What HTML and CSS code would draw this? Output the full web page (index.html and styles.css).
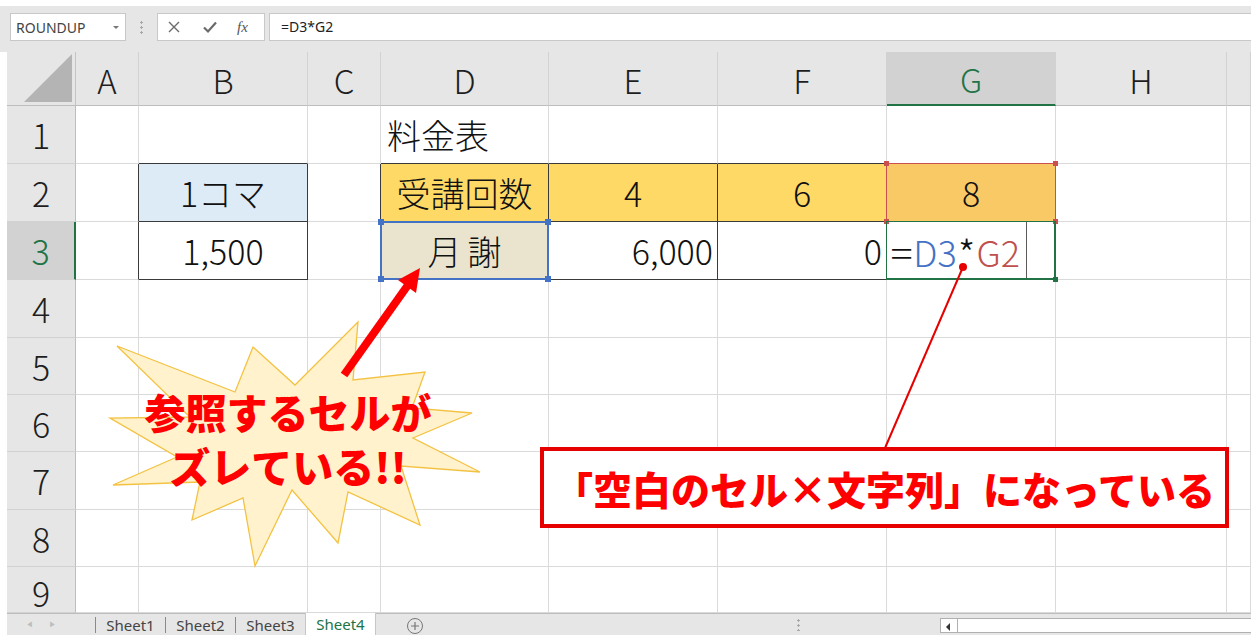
FILE: index.html
```html
<!DOCTYPE html>
<html lang="ja">
<head>
<meta charset="utf-8">
<title>料金表</title>
<link rel="stylesheet" href="styles.css">
</head>
<body>
<div class="page">
  <div class="fbar">
    <div class="namebox"><span>ROUNDUP</span><span class="dd"></span></div>
    <div class="vdots"></div>
    <div class="btns">
      <svg class="ico" width="14" height="14" viewBox="0 0 14 14"><path d="M2 2 L12 12 M12 2 L2 12" stroke="#6a6a6a" stroke-width="1.4" fill="none"/></svg>
      <svg class="ico" width="16" height="14" viewBox="0 0 16 14"><path d="M2 7.5 L6 11.5 L14 2.5" stroke="#6a6a6a" stroke-width="2.2" fill="none"/></svg>
      <span class="fx">fx</span>
    </div>
    <div class="finput">=D3*G2</div>
  </div>

  <div class="sheet">
    <!-- header row -->
    <div class="corner"><div class="tri"></div></div>
    <div class="h">A</div><div class="h">B</div><div class="h">C</div><div class="h">D</div><div class="h">E</div><div class="h">F</div><div class="h sel">G</div><div class="h">H</div><div class="h"></div>

    <!-- row 1 -->
    <div class="r">1</div>
    <div class="c"></div><div class="c bb"></div><div class="c"></div><div class="c bb left">料金表</div><div class="c bb"></div><div class="c bb"></div><div class="c bb"></div><div class="c"></div><div class="c"></div>

    <!-- row 2 -->
    <div class="r">2</div>
    <div class="c br"></div>
    <div class="c t blue">1コマ</div>
    <div class="c br"></div>
    <div class="c t yel">受講回数</div>
    <div class="c t yel">4</div>
    <div class="c t yel">6</div>
    <div class="c t org hl hl-red">8<span class="sq tl"></span><span class="sq tr"></span><span class="sq bl"></span><span class="sq br2"></span></div>
    <div class="c"></div><div class="c"></div>

    <!-- row 3 -->
    <div class="r rsel">3</div>
    <div class="c br"></div>
    <div class="c t">1,500</div>
    <div class="c br"></div>
    <div class="c t tan hl hl-blue"><span class="spaced">月謝</span><span class="sq tl"></span><span class="sq tr"></span><span class="sq bl"></span><span class="sq br2"></span></div>
    <div class="c t right">6,000</div>
    <div class="c t right">0</div>
    <div class="c t edit hl hl-green"><span class="etext"><span class="eq">=</span><span class="ref-b">D3</span><span class="ast">*</span><span class="ref-r">G2</span></span><span class="sq br2"></span></div>
    <div class="c"></div><div class="c"></div>

    <!-- rows 4-9 -->
    <div class="r">4</div>
    <div class="c"></div><div class="c"></div><div class="c"></div><div class="c"></div><div class="c"></div><div class="c"></div><div class="c"></div><div class="c"></div><div class="c"></div>
    <div class="r">5</div>
    <div class="c"></div><div class="c"></div><div class="c"></div><div class="c"></div><div class="c"></div><div class="c"></div><div class="c"></div><div class="c"></div><div class="c"></div>
    <div class="r">6</div>
    <div class="c"></div><div class="c"></div><div class="c"></div><div class="c"></div><div class="c"></div><div class="c"></div><div class="c"></div><div class="c"></div><div class="c"></div>
    <div class="r">7</div>
    <div class="c"></div><div class="c"></div><div class="c"></div><div class="c"></div><div class="c"></div><div class="c"></div><div class="c"></div><div class="c"></div><div class="c"></div>
    <div class="r">8</div>
    <div class="c"></div><div class="c"></div><div class="c"></div><div class="c"></div><div class="c"></div><div class="c"></div><div class="c"></div><div class="c"></div><div class="c"></div>
    <div class="r r9">9</div>
    <div class="c"></div><div class="c"></div><div class="c"></div><div class="c"></div><div class="c"></div><div class="c"></div><div class="c"></div><div class="c"></div><div class="c"></div>
  </div>

  <div class="tabs">
    <div class="nav"><span class="arr">&#9664;</span><span class="arr">&#9654;</span></div>
    <div class="tab">Sheet1</div>
    <div class="tab">Sheet2</div>
    <div class="tab">Sheet3</div>
    <div class="tab active">Sheet4</div>
    <div class="add">
      <svg width="18" height="18" viewBox="0 0 18 18"><circle cx="9" cy="9" r="7.5" fill="none" stroke="#777" stroke-width="1"/><path d="M9 5 V13 M5 9 H13" stroke="#777" stroke-width="1.2"/></svg>
    </div>
    <div class="spacer"></div>
    <div class="hdots"></div>
    <div class="hscroll"><span class="sarr"></span></div>
  </div>

  <div class="overlay">
    <svg class="shapes" width="1251" height="643" viewBox="0 0 1251 643">
      <polygon points="117,346 235,392 253,347 295,385 358,322 353,380 425,372 412,408 472,413 413,438 480,472 401,466 420,525 348,492 338,543 292,490 255,566 243,498 192,520 200,482 113,485 177,457 110,418 190,417" fill="#fff2cc" stroke="#f4c242" stroke-width="1.3"/>
      <line x1="344" y1="375" x2="408" y2="285" stroke="#ff0000" stroke-width="8"/>
      <polygon points="420,268 416,293 398,280" fill="#ff0000"/>
      <line x1="963" y1="267" x2="885" y2="448" stroke="#e60000" stroke-width="2"/>
      <circle cx="963" cy="267" r="4" fill="#e60000"/>
    </svg>
    <div class="startext">参照するセルが<br>ズレている!!</div>
    <div class="note">「空白のセル×文字列」になっている</div>
  </div>
</div>
</body>
</html>
```

FILE: styles.css
```css
* { box-sizing: border-box; }

body {
  margin: 0;
  background: #ffffff;
  font-family: "Noto Sans CJK JP", "Noto Sans", sans-serif;
}

.page {
  position: relative;
  width: 1251px;
  height: 643px;
  overflow: hidden;
  background: #ffffff;
  padding-top: 6px;
}

/* formula bar */
.fbar {
  height: 46px;
  background: #e6e6e6;
  display: flex;
  align-items: flex-start;
  padding: 7px 0 0 10px;
}

.namebox {
  width: 116px;
  height: 28px;
  background: #ffffff;
  border: 1px solid #c8c8c8;
  display: flex;
  align-items: center;
  justify-content: space-between;
  padding: 0 6px 0 5px;
  font-family: "Noto Sans", "Liberation Sans", sans-serif;
  font-size: 14px;
  color: #444444;
}

.dd {
  width: 0;
  height: 0;
  border-left: 3px solid transparent;
  border-right: 3px solid transparent;
  border-top: 3px solid #777777;
}

.vdots {
  width: 3px;
  height: 15px;
  margin: 7px 14px 0 14px;
  background-image: radial-gradient(circle, #a8a8a8 1px, transparent 1.4px);
  background-size: 3px 5px;
}

.btns {
  width: 108px;
  height: 28px;
  background: #ffffff;
  border: 1px solid #c8c8c8;
  display: flex;
  align-items: center;
  padding-left: 9px;
  gap: 21px;
}

.fx {
  font-family: "Liberation Serif", serif;
  font-style: italic;
  font-size: 15px;
  color: #555555;
  margin-left: -2px;
}

.finput {
  margin-left: 4px;
  flex: 1;
  height: 28px;
  background: #ffffff;
  border: 1px solid #c8c8c8;
  border-right: none;
  padding-left: 11px;
  font-family: "Noto Sans", "Liberation Sans", sans-serif;
  font-size: 14px;
  line-height: 26px;
  color: #222222;
}

/* sheet grid */
.sheet {
  margin-left: 7px;
  display: grid;
  grid-template-columns: 69px 63px 169px 73px 168px 169px 169px 169px 171px 24px;
  grid-template-rows: 54px 58px 58px 58px 58px 57px 57px 58px 57px 46px;
}

.corner {
  background: #e6e6e6;
  border-right: 1px solid #c4c4c4;
  border-bottom: 1px solid #bdbdbd;
  display: flex;
  justify-content: flex-end;
  align-items: flex-end;
  padding: 0 3px 3px 0;
}

.tri {
  width: 48px;
  height: 48px;
  background: #b4b4b4;
  clip-path: polygon(100% 0, 100% 100%, 0 100%);
}

.h {
  background: #e6e6e6;
  border-right: 1px solid #d2d2d2;
  border-bottom: 1px solid #bdbdbd;
  display: flex;
  align-items: center;
  justify-content: center;
  font-size: 33px;
  font-weight: 300;
  color: #1e1e1e;
  padding-top: 2px;
}

.h.sel {
  background: #d2d2d2;
  color: #217346;
  border-bottom: 2px solid #217346;
}

.r {
  background: #e6e6e6;
  border-right: 1px solid #bdbdbd;
  border-bottom: 1px solid #d2d2d2;
  display: flex;
  align-items: center;
  justify-content: center;
  font-size: 34px;
  font-weight: 300;
  color: #1e1e1e;
}

.r.rsel {
  background: #d2d2d2;
  color: #217346;
  border-right: 2px solid #217346;
}

.r.r9 {
  align-items: flex-start;
  padding-top: 9px;
  line-height: 34px;
}

.c {
  border-right: 1px solid #dadada;
  border-bottom: 1px solid #dadada;
  display: flex;
  align-items: center;
  justify-content: center;
  font-size: 34px;
  font-weight: 300;
  color: #111111;
  white-space: nowrap;
}

.c.left { justify-content: flex-start; padding-left: 6px; }
.c.right { justify-content: flex-end; padding-right: 4px; }

.c.bb { border-bottom-color: #3a3a3a; }
.c.br { border-right-color: #3a3a3a; }
.c.t { border-right-color: #3a3a3a; border-bottom-color: #3a3a3a; }

.blue { background: #ddebf7; }
.yel { background: #ffd966; }
.org { background: #f8c964; }
.tan { background: #eae4ce; }

.spaced { letter-spacing: 6px; margin-right: -6px; }

/* highlighted reference cells */
.hl { position: relative; z-index: 2; }
.hl::after {
  content: "";
  position: absolute;
  top: -1px;
  left: -1px;
  right: -1px;
  bottom: -1px;
  pointer-events: none;
}
.hl-red::after { border: 1px solid #c9504f; }
.hl-blue::after { border: 2px solid #4472c4; }
.hl-green::after { border: 1px solid #217346; border-width: 1px 2px 2px 1px; }

.sq {
  position: absolute;
  width: 5px;
  height: 5px;
  z-index: 3;
}
.hl-red .sq { background: #c9504f; }
.hl-blue .sq { background: #4472c4; width: 6px; height: 6px; }
.hl-green .sq { background: #217346; }
.sq.tl { top: -3px; left: -3px; }
.sq.tr { top: -3px; right: -3px; }
.sq.bl { bottom: -3px; left: -3px; }
.sq.br2 { bottom: -3px; right: -3px; }

.c.edit {
  justify-content: flex-start;
  align-items: stretch;
}

.etext {
  width: 140px;
  border-right: 1px solid #5a5a5a;
  padding-left: 5px;
  display: flex;
  align-items: center;
  font-size: 36px;
  font-weight: 300;
  color: #111111;
}

.eq { margin-right: 2px; transform: scaleX(1.15); }
.ast { font-size: 40px; line-height: 40px; margin: 4px 1px 0; }

.ref-b { color: #4472c4; }
.ref-r { color: #c0504d; }

/* sheet tabs */
.tabs {
  margin-left: 7px;
  height: 22px;
  background: #e6e6e6;
  border-top: 1px solid #bdbdbd;
  display: flex;
  align-items: stretch;
  font-family: "Noto Sans", "Liberation Sans", sans-serif;
  font-size: 15px;
  color: #444444;
}

.nav {
  width: 88px;
  display: flex;
  align-items: center;
  gap: 16px;
  padding-left: 19px;
}

.arr {
  font-size: 7px;
  color: #bdbdbd;
}

.tab {
  width: 70px;
  display: flex;
  align-items: center;
  justify-content: center;
  border-left: 1px solid #8a8a8a;
  margin: 3px 0 2px;
}

.tab.active {
  width: 71px;
  margin: -1px 0 0;
  background: #ffffff;
  color: #217346;
  border-left: 1px solid #c6c6c6;
  border-right: 1px solid #c6c6c6;
}

.add {
  width: 78px;
  display: flex;
  align-items: center;
  justify-content: center;
  padding-top: 2px;
}

.spacer { flex: 1; }

.hdots {
  width: 3px;
  margin: 4px 140px 4px 0;
  background-image: radial-gradient(circle, #a8a8a8 1px, transparent 1.4px);
  background-size: 3px 5px;
}

.hscroll {
  width: 311px;
  margin: 4px 0 2px;
  background: #ffffff;
  border: 1px solid #b0b0b0;
  border-right: none;
  display: flex;
}

.sarr {
  width: 17px;
  border-right: 1px solid #b0b0b0;
  position: relative;
}
.sarr::before {
  content: "";
  position: absolute;
  left: 5px;
  top: 4px;
  border-top: 4px solid transparent;
  border-bottom: 4px solid transparent;
  border-right: 4px solid #333333;
}

/* callouts over the sheet */
.overlay {
  position: absolute;
  top: 0;
  left: 0;
  width: 1251px;
  height: 643px;
  pointer-events: none;
  z-index: 5;
}

.shapes { position: absolute; top: 0; left: 0; }

.startext {
  position: absolute;
  left: 128px;
  top: 384px;
  width: 320px;
  text-align: center;
  font-size: 41px;
  font-weight: 900;
  line-height: 54px;
  color: #ff0000;
  white-space: nowrap;
}

.note {
  position: absolute;
  left: 540px;
  top: 447px;
  width: 689px;
  height: 81px;
  border: 4px solid #e60000;
  background: #ffffff;
  display: flex;
  align-items: center;
  justify-content: center;
  font-size: 39px;
  font-weight: 900;
  color: #ff0000;
  white-space: nowrap;
}
```
